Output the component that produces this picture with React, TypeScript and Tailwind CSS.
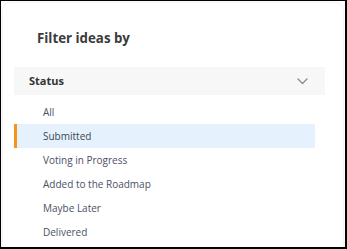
import React, { useState } from 'react';

const statuses = ['All', 'Submitted', 'Voting in Progress', 'Added to the Roadmap', 'Maybe Later', 'Delivered'];

const Chevron = () => (
  <svg width="11" height="7" viewBox="0 0 11 7" fill="none" className="text-[#8a8a8a]">
    <path d="M1 1l4.5 4.5L10 1" stroke="currentColor" strokeWidth="1.3" strokeLinecap="round" strokeLinejoin="round" />
  </svg>
);

export default function App() {
  const [selected, setSelected] = useState('Submitted');

  return (
    <div className="w-[347px] h-[249px] overflow-hidden bg-white border-l border-t border-r-2 border-b-2 border-black font-['Open_Sans',sans-serif]">
      <div className="ml-[2px] mt-[2px] mr-[2px] h-[260px] rounded-lg bg-white shadow-[0_0_3px_rgba(0,0,0,0.12)] px-[11px] pt-[25px]">
        <h2 className="pl-[23px] text-[13.3px] leading-[20px] font-bold text-[#3b3b3b]">Filter ideas by</h2>

        <div className="mt-[19px] w-[311px]">
          <button className="flex w-full h-[28px] items-center justify-between bg-[#f7f7f7] pl-[15px] pr-[17px]">
            <span className="text-[11px] font-bold text-[#333333]">Status</span>
            <Chevron />
          </button>

          <ul className="mt-[5px] w-[301px]">
            {statuses.map((s) => {
              const active = s === selected;
              return (
                <li
                  key={s}
                  onClick={() => setSelected(s)}
                  className={`flex h-[24px] items-center cursor-pointer border-l-[3px] pl-[26px] text-[10px] ${
                    active ? 'border-[#f7941d] bg-[#e5f1fc] text-[#3e4654]' : 'border-transparent text-[#4a5066]'
                  }`}
                >
                  {s}
                </li>
              );
            })}
          </ul>
        </div>
      </div>
    </div>
  );
}
